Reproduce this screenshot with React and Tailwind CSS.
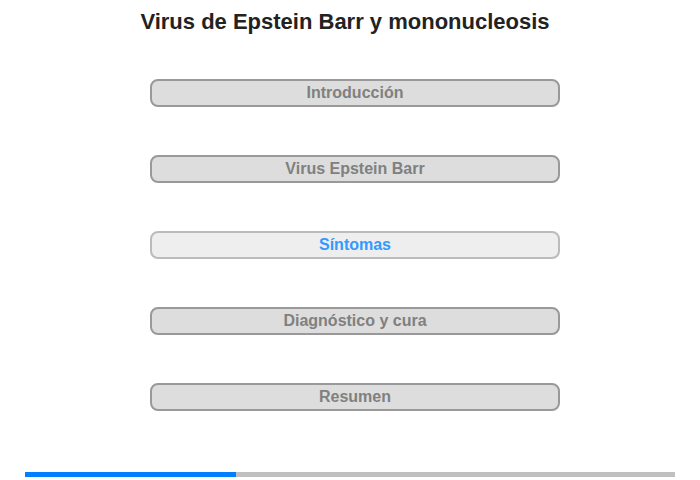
export default function App() {
  const items = [
    { label: "Introducción", active: false },
    { label: "Virus Epstein Barr", active: false },
    { label: "Síntomas", active: true },
    { label: "Diagnóstico y cura", active: false },
    { label: "Resumen", active: false },
  ];
  return (
    <div className="w-[700px] h-[480px] bg-white flex flex-col" style={{ fontFamily: '"Liberation Sans", Arial, sans-serif' }}>
      <h1 className="pt-[9px] h-[45px] text-[22px] leading-[25px] font-bold text-[#222222] text-center pr-[10px]">
        Virus de Epstein Barr y mononucleosis
      </h1>
      <div className="flex flex-col gap-[48px] pl-[150px] pt-[34px]">
        {items.map((it) => (
          <div
            key={it.label}
            className={
              it.active
                ? "w-[410px] h-[28px] rounded-[8px] border-2 border-[#bbbbbb] bg-[#eeeeee] flex items-center justify-center text-[16px] font-bold text-[#3399ff]"
                : "w-[410px] h-[28px] rounded-[8px] border-2 border-[#999999] bg-[#dddddd] flex items-center justify-center text-[16px] font-bold text-[#808080]"
            }
          >
            {it.label}
          </div>
        ))}
      </div>
      <div className="mt-auto mb-[3px] mx-[25px] h-[5px] flex bg-[#c0c0c0]">
        <div className="w-[211px] h-full bg-[#007fff]" />
      </div>
    </div>
  );
}
